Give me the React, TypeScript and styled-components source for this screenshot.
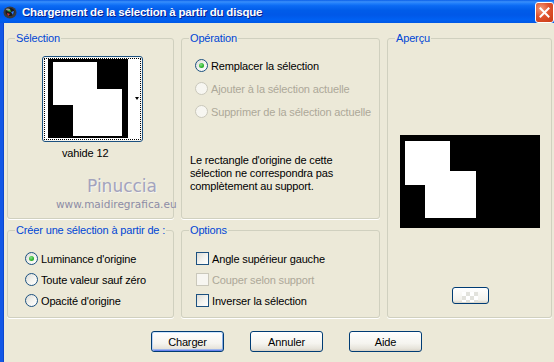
import React from 'react';
import styled, { createGlobalStyle, css } from 'styled-components';

const GlobalStyle = createGlobalStyle`
  html, body {
    margin: 0;
    padding: 0;
    background: #ece9d8;
  }
  body {
    font-family: 'Liberation Sans', Arial, sans-serif;
    font-size: 11px;
    letter-spacing: -0.15px;
    color: #000;
  }
`;

// white shape of the loaded selection, relative to its black image
const thumbShape = '5,3 49,3 49,30 74,30 74,77 25,77 25,46 5,46';
const previewShape = '5,6 50,6 50,36 76,36 76,83 25,83 25,50 5,50';

const operations = [
  { label: 'Remplacer la sélection', checked: true, disabled: false },
  { label: 'Ajouter à la sélection actuelle', checked: false, disabled: true },
  { label: 'Supprimer de la sélection actuelle', checked: false, disabled: true },
];

const sources = [
  { label: "Luminance d'origine", checked: true },
  { label: 'Toute valeur sauf zéro', checked: false },
  { label: "Opacité d'origine", checked: false },
];

const options = [
  { label: 'Angle supérieur gauche', disabled: false },
  { label: 'Couper selon support', disabled: true },
  { label: 'Inverser la sélection', disabled: false },
];

const SelectionImage = ({ width, height, points }: { width: number; height: number; points: string }) => (
  <svg width={width} height={height} viewBox={`0 0 ${width} ${height}`} style={{ display: 'block' }}>
    <defs>
      <filter id={`soft${width}`} x="-5%" y="-5%" width="110%" height="110%">
        <feGaussianBlur stdDeviation="0.6" />
      </filter>
    </defs>
    <rect width={width} height={height} fill="#000" />
    <polygon points={points} fill="#fff" filter={`url(#soft${width})`} />
  </svg>
);

const App = () => {
  return (
    <>
      <GlobalStyle />
      <Window>
        <TitleBar>
          <AppIcon width="14" height="13" viewBox="0 0 14 13">
            <ellipse cx="7" cy="6.5" rx="6.5" ry="6" fill="#3a3a3a" />
            <ellipse cx="7" cy="6" rx="4.5" ry="4" fill="#1a1a1a" />
            <path d="M4 5 L7 3 L8 6 Z" fill="#2fbf3a" />
            <path d="M8 6 L11 5 L10 9 Z" fill="#2f7dff" />
            <path d="M4 7 L7 8 L5 10 Z" fill="#e0303a" />
            <ellipse cx="5" cy="3.5" rx="2" ry="1" fill="#9a9a9a" />
          </AppIcon>
          <Title>Chargement de la sélection à partir du disque</Title>
          <CloseButton>
            <svg width="11" height="11" viewBox="0 0 11 11">
              <path d="M1.5 1.5 L9.5 9.5 M9.5 1.5 L1.5 9.5" stroke="#fff" strokeWidth="2" strokeLinecap="square" />
            </svg>
          </CloseButton>
        </TitleBar>

        <Body>
          <Groups>
            <GroupBox>
              <GroupLabel>Sélection</GroupLabel>
              <SelectionPane>
                <Thumb>
                  <FocusRing>
                    <SelectionImage width={80} height={79} points={thumbShape} />
                    <DropStrip>
                      <DropArrow />
                    </DropStrip>
                  </FocusRing>
                </Thumb>
                <ThumbCaption>vahide 12</ThumbCaption>
              </SelectionPane>
              <Watermark>
                <WatermarkName>Pinuccia</WatermarkName>
                <WatermarkUrl>www.maidiregrafica.eu</WatermarkUrl>
              </Watermark>
            </GroupBox>

            <GroupBox>
              <GroupLabel>Opération</GroupLabel>
              <OptionList $top={15} $indent={13}>
                {operations.map((op) => (
                  <OptionRow key={op.label} $height={23} $disabled={op.disabled}>
                    <Radio $checked={op.checked} $disabled={op.disabled} />
                    <span>{op.label}</span>
                  </OptionRow>
                ))}
              </OptionList>
              <Notice>
                Le rectangle d'origine de cette
                <br />
                sélection ne correspondra pas
                <br />
                complètement au support.
              </Notice>
            </GroupBox>

            <PreviewGroup>
              <GroupLabel>Aperçu</GroupLabel>
              <PreviewPane>
                <SelectionImage width={140} height={93} points={previewShape} />
                <ZoomButton>
                  <Checker />
                </ZoomButton>
              </PreviewPane>
            </PreviewGroup>

            <GroupBox>
              <GroupLabel>Créer une sélection à partir de :</GroupLabel>
              <OptionList $top={17} $indent={17}>
                {sources.map((src) => (
                  <OptionRow key={src.label} $height={21}>
                    <Radio $checked={src.checked} />
                    <span>{src.label}</span>
                  </OptionRow>
                ))}
              </OptionList>
            </GroupBox>

            <GroupBox>
              <GroupLabel>Options</GroupLabel>
              <OptionList $top={17} $indent={14}>
                {options.map((opt) => (
                  <OptionRow key={opt.label} $height={21} $disabled={opt.disabled}>
                    <Checkbox $disabled={opt.disabled} />
                    <span>{opt.label}</span>
                  </OptionRow>
                ))}
              </OptionList>
            </GroupBox>
          </Groups>

          <ButtonRow>
            <DialogButton $default>Charger</DialogButton>
            <DialogButton>Annuler</DialogButton>
            <DialogButton>Aide</DialogButton>
          </ButtonRow>
        </Body>
      </Window>
    </>
  );
};

const Window = styled.div`
  width: 554px;
  height: 362px;
  overflow: hidden;
  display: flex;
  flex-direction: column;
  background: #ece9d8;
`;

const TitleBar = styled.div`
  height: 23px;
  flex-shrink: 0;
  display: flex;
  align-items: center;
  padding-left: 3px;
  background: linear-gradient(
    to bottom,
    #0a5ee8 0%,
    #3a8ffa 8%,
    #2280fb 14%,
    #0b6af3 25%,
    #005ce9 45%,
    #0058e8 65%,
    #0060f2 85%,
    #0058e6 100%
  );
`;

const AppIcon = styled.svg`
  flex-shrink: 0;
  margin-top: 1px;
`;

const Title = styled.div`
  flex: 1;
  margin-left: 5px;
  color: #fff;
  font-family: 'Liberation Sans', Arial, sans-serif;
  font-weight: bold;
  font-size: 11.5px;
  letter-spacing: -0.2px;
  text-shadow: 1px 1px 0 #0a1e8a;
  white-space: nowrap;
`;

const CloseButton = styled.div`
  width: 17px;
  height: 19px;
  margin-top: 1px;
  border: 1px solid #fff;
  border-radius: 3px;
  display: flex;
  align-items: center;
  justify-content: center;
  background: radial-gradient(circle at 30% 30%, #f39a7a 0%, #e0532e 45%, #c83a14 100%);
`;

const Body = styled.div`
  flex: 1;
  border-left: 3px solid #1257e6;
  box-shadow: inset 1px 0 0 #0b47d0;
  padding: 15px 0 0 4px;
`;

const Groups = styled.div`
  display: grid;
  grid-template-columns: 167px 199px 165px;
  grid-template-rows: 181px 88px;
  column-gap: 7px;
  row-gap: 11px;
`;

const GroupBox = styled.div`
  position: relative;
  border: 1px solid #d0d0bf;
  border-radius: 3px;
  box-shadow: 0 1px 0 #fff;
`;

const PreviewGroup = styled(GroupBox)`
  grid-column: 3;
  grid-row: 1 / span 2;
`;

const GroupLabel = styled.span`
  position: absolute;
  top: -7px;
  left: 7px;
  padding: 0 1px;
  line-height: 13px;
  background: #ece9d8;
  color: #0046d5;
  white-space: nowrap;
`;

const SelectionPane = styled.div`
  display: flex;
  flex-direction: column;
  align-items: flex-start;
  padding: 17px 0 0 34px;
`;

const Thumb = styled.div`
  width: 101px;
  height: 86px;
  box-sizing: border-box;
  border: 1px solid #1c5180;
  border-radius: 3px;
  padding: 1px;
  background: #f4f3ee;
`;

const FocusRing = styled.div`
  height: 100%;
  box-sizing: border-box;
  border: 1px dotted #000;
  padding: 0 0 1px 3px;
  display: flex;
  background: #fff;
`;

const DropStrip = styled.div`
  flex: 1;
  display: flex;
  align-items: center;
  justify-content: flex-end;
  padding-right: 1px;
  background: #fff;
`;

const DropArrow = styled.span`
  width: 0;
  height: 0;
  border-left: 2.5px solid transparent;
  border-right: 2.5px solid transparent;
  border-top: 3px solid #000;
`;

const ThumbCaption = styled.div`
  margin: 5px 0 0 20px;
  line-height: 13px;
`;

const Watermark = styled.div`
  position: absolute;
  left: 48px;
  top: 136px;
  display: flex;
  flex-direction: column;
  pointer-events: none;
`;

const WatermarkName = styled.span`
  margin-left: 31px;
  font-family: 'DejaVu Sans', sans-serif;
  font-size: 17px;
  line-height: 23px;
  letter-spacing: 0;
  color: #a3a3bd;
  text-shadow: 1px 1px 0 #f6f5ef;
`;

const WatermarkUrl = styled.span`
  font-family: 'DejaVu Sans', sans-serif;
  font-size: 10.5px;
  line-height: 12px;
  letter-spacing: 0;
  color: #8c8ca6;
  white-space: nowrap;
`;

const OptionList = styled.div<{ $top: number; $indent: number }>`
  display: flex;
  flex-direction: column;
  padding-top: ${(p) => p.$top}px;
  padding-left: ${(p) => p.$indent}px;
`;

const OptionRow = styled.div<{ $height: number; $disabled?: boolean }>`
  height: ${(p) => p.$height}px;
  display: flex;
  align-items: center;
  gap: 3px;
  white-space: nowrap;
  color: ${(p) => (p.$disabled ? '#aca899' : '#000')};
`;

const Radio = styled.span<{ $checked?: boolean; $disabled?: boolean }>`
  position: relative;
  flex-shrink: 0;
  width: 13px;
  height: 13px;
  box-sizing: border-box;
  border-radius: 50%;
  border: 1px solid ${(p) => (p.$disabled ? '#cac8bb' : '#1c5180')};
  background: ${(p) =>
    p.$disabled ? '#f7f6f1' : 'linear-gradient(135deg, #dcdcd7 0%, #f4f4f0 55%, #ffffff 100%)'};
  ${(p) =>
    p.$checked &&
    css`
      &::after {
        content: '';
        position: absolute;
        left: 3px;
        top: 3px;
        width: 5px;
        height: 5px;
        border-radius: 50%;
        background: radial-gradient(circle at 40% 35%, #8be08b 0%, #2eb82e 55%, #1a8c1a 100%);
      }
    `}
`;

const Checkbox = styled.span<{ $disabled?: boolean }>`
  flex-shrink: 0;
  width: 13px;
  height: 13px;
  box-sizing: border-box;
  border: 1px solid ${(p) => (p.$disabled ? '#cac8bb' : '#1c5180')};
  background: ${(p) =>
    p.$disabled ? '#f7f6f1' : 'linear-gradient(135deg, #dcdcd7 0%, #f4f4f0 55%, #ffffff 100%)'};
`;

const Notice = styled.p`
  margin: 31px 0 0 8px;
  line-height: 13px;
`;

const PreviewPane = styled.div`
  display: flex;
  flex-direction: column;
  align-items: center;
  padding: 96px 0 0 1px;
`;

const ZoomButton = styled.div`
  margin-top: 59px;
  width: 37px;
  height: 17px;
  box-sizing: border-box;
  border: 1px solid #003c74;
  border-radius: 3px;
  display: flex;
  align-items: center;
  justify-content: center;
  background: linear-gradient(to bottom, #ffffff 0%, #f3f2ec 80%, #d8d4c8 100%);
`;

const Checker = styled.span`
  width: 16px;
  height: 10px;
  margin-top: 2px;
  background-color: #ffffff;
  background-image: conic-gradient(#e2e2dc 25%, transparent 0 50%, #e2e2dc 0 75%, transparent 0);
  background-size: 8px 8px;
`;

const ButtonRow = styled.div`
  display: flex;
  gap: 26px;
  margin-top: 13px;
  padding-left: 144px;
`;

const DialogButton = styled.button<{ $default?: boolean }>`
  width: 73px;
  height: 21px;
  padding: 0;
  border: 1px solid #003c74;
  border-radius: 3px;
  font-family: 'Liberation Sans', Arial, sans-serif;
  font-size: 11px;
  letter-spacing: -0.15px;
  color: #000;
  background: linear-gradient(to bottom, #ffffff 0%, #f5f4ef 60%, #e6e3da 88%, #d6d0c5 100%);
  ${(p) =>
    p.$default &&
    css`
      box-shadow: inset 0 1px 0 #cee7ff, inset 1px 0 0 #bcd4f6, inset -1px 0 0 #89ade4,
        inset 0 -1px 0 #6982ee, inset 0 -2px 0 #9fb6ec;
    `}
`;

export default App;
